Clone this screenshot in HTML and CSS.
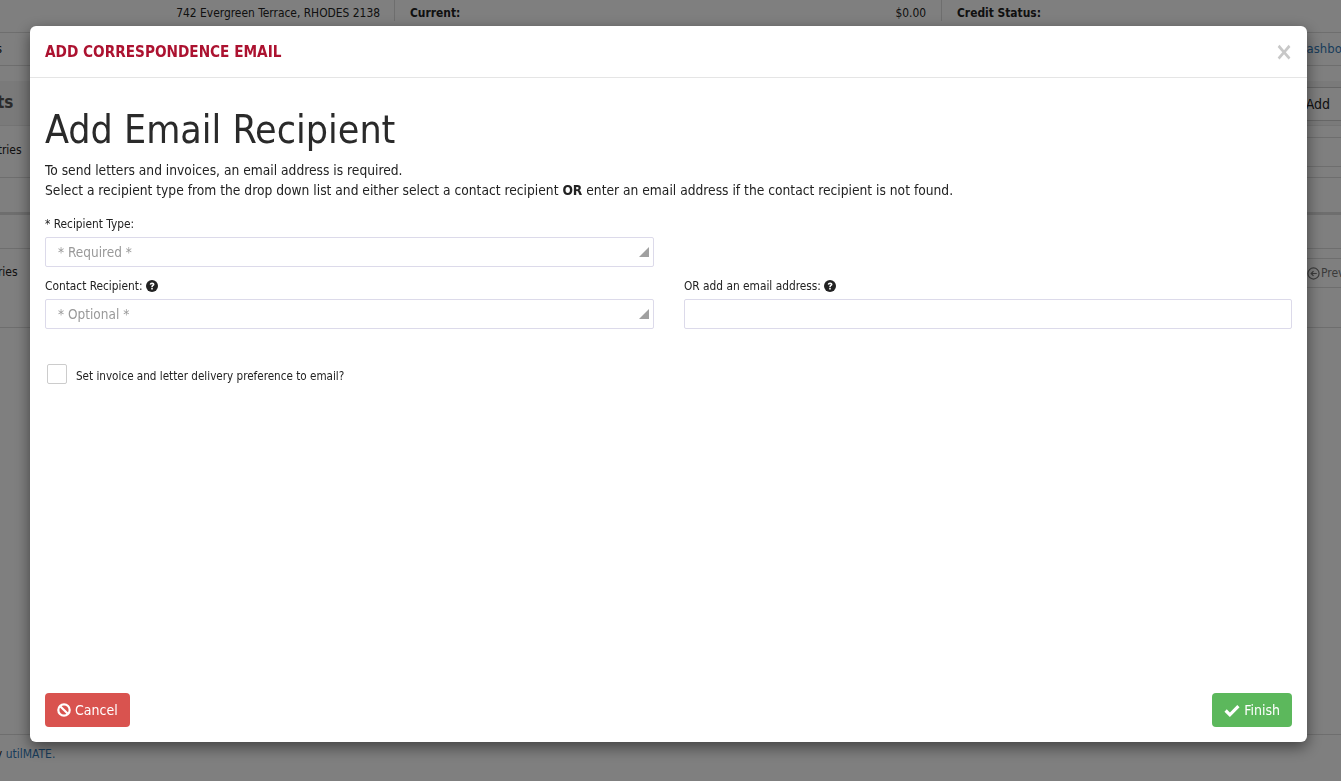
FILE: index.html
```html
<!DOCTYPE html>
<html lang="en">
<head>
<meta charset="utf-8">
<title>Add Correspondence Email</title>
<link rel="stylesheet" href="styles.css">
</head>
<body>
<div class="page">
  <div class="info-strip">
    <div class="info-cell address"><span>742 Evergreen Terrace, RHODES 2138</span></div>
    <div class="info-cell current"><strong>Current:</strong><span>$0.00</span></div>
    <div class="info-cell credit"><strong>Credit Status:</strong></div>
  </div>
  <div class="nav-row"><span class="nav-cut">s</span><a class="link nav-link">Dashboard</a></div>
  <div class="gap-row"></div>
  <div class="head-row"><strong class="head-cut">ts</strong><span class="add-btn">Add</span></div>
  <div class="entries-row"><span class="entries-cut">Entries</span><span class="tool-box"></span></div>
  <div class="blank-row"></div>
  <div class="thin-row"></div>
  <div class="entries-row second"><span class="entries-cut second-cut">Entries</span><span class="tool-box prev"><svg class="prev-icon" viewBox="0 0 14 14"><circle cx="7" cy="7" r="6" fill="none" stroke="currentColor" stroke-width="1.300"/><path d="M10.500 7H4.500M7 4.500 4.500 7 7 9.500" fill="none" stroke="currentColor" stroke-width="1.300"/></svg>Previous</span></div>
  <div class="filler"></div>
  <div class="footer-row"><span class="footer-cut">by <a class="link">utilMATE.</a></span></div>
</div>

<div class="overlay">
  <div class="modal">
    <header class="modal-header">
      <h4 class="modal-title">ADD CORRESPONDENCE EMAIL</h4>
      <span class="close">×</span>
    </header>
    <main class="modal-body">
      <h1 class="heading">Add Email Recipient</h1>
      <p class="intro">To send letters and invoices, an email address is required.<br>Select a recipient type from the drop down list and either select a contact recipient <strong>OR</strong> enter an email address if the contact recipient is not found.</p>
      <div class="form-grid">
        <div class="field">
          <label class="label">* Recipient Type:</label>
          <div class="control select"><span>* Required *</span><i class="corner"></i></div>
        </div>
        <div></div>
        <div class="field">
          <label class="label">Contact Recipient: <svg class="help" viewBox="0 0 12 12"><circle cx="6" cy="6" r="6"/><path d="M3.700 4.600c.1-1.500 1.100-2.200 2.400-2.200 1.400 0 2.400.8 2.400 1.900 0 1.600-1.700 1.500-1.700 2.800H5.200c0-1.900 1.500-1.900 1.500-2.600 0-.3-.3-.6-.7-.6-.5 0-.7.300-.8.800zM5.200 7.800h1.600v1.600H5.200z" fill="#fff"/></svg></label>
          <div class="control select"><span>* Optional *</span><i class="corner"></i></div>
        </div>
        <div class="field">
          <label class="label">OR add an email address: <svg class="help" viewBox="0 0 12 12"><circle cx="6" cy="6" r="6"/><path d="M3.700 4.600c.1-1.500 1.100-2.200 2.400-2.200 1.400 0 2.400.8 2.400 1.900 0 1.600-1.700 1.500-1.700 2.800H5.200c0-1.900 1.500-1.900 1.500-2.600 0-.3-.3-.6-.7-.6-.5 0-.7.300-.8.800zM5.200 7.800h1.600v1.600H5.200z" fill="#fff"/></svg></label>
          <div class="control"></div>
        </div>
      </div>
      <div class="check-row"><span class="checkbox"></span><span class="check-label">Set invoice and letter delivery preference to email?</span></div>
    </main>
    <footer class="modal-footer">
      <button class="btn danger" type="button"><svg class="btn-icon" viewBox="0 0 14 14"><circle cx="7" cy="7" r="5.700" fill="none" stroke="#fff" stroke-width="2.200"/><path d="M3.200 3.200l7.600 7.600" stroke="#fff" stroke-width="2.200"/></svg>Cancel</button>
      <button class="btn success" type="button"><svg class="btn-icon check" viewBox="0 0 15 12"><path d="M1.500 6 5.500 10 13.500 2" fill="none" stroke="#fff" stroke-width="3"/></svg>Finish</button>
    </footer>
  </div>
</div>
</body>
</html>
```
FILE: styles.css
```css
* { box-sizing: border-box; }
html, body { margin: 0; height: 100%; overflow: hidden; }
body {
  font-family: "DejaVu Sans Condensed", "DejaVu Sans", sans-serif;
  font-size: 12px;
  color: #222;
  background: #fff;
}
.page { height: 781px; display: flex; flex-direction: column; overflow: hidden; }

.info-strip { height: 32px; display: flex; flex: none; align-items: flex-start; }
.info-cell { height: 21px; padding-top: 6px; line-height: 15px; font-size: 11.900px; }
.address { width: 395px; padding-right: 14px; text-align: right; border-right: 1px solid #ddd; }
.current { width: 547px; padding-left: 15px; padding-right: 15px; border-right: 1px solid #ddd; display: flex; justify-content: space-between; }
.credit { padding-left: 15px; }

.link { color: #337ab7; }
.nav-row { height: 34px; border-top: 1px solid #ddd; border-bottom: 1px solid #ddd; display: flex; justify-content: space-between; align-items: center; flex: none; font-size: 13px; padding-bottom: 2px; }
.nav-cut { margin-left: -4px; }
.nav-link { margin-right: -20px; }
.gap-row { height: 15px; flex: none; }
.head-row { height: 45px; background: #f5f5f5; display: flex; justify-content: space-between; align-items: flex-start; flex: none; border-bottom: 1px solid #e8e8e8; }
.head-cut { font-size: 17px; color: #555; margin: 11px 0 0 -3px; }
.add-btn { font-size: 14px; height: 34px; margin: 6px -10px 0 0; padding: 8px 20px 0 5px; border: 1px solid #ccc; background: #fff; }

.entries-row { height: 52px; border-bottom: 1px solid #ddd; display: flex; justify-content: space-between; align-items: flex-start; flex: none; }
.entries-cut { margin: 17px 0 0 -16px; }
.tool-box { height: 30px; width: 60px; margin: 11px -10px 0 0; border-top: 1px solid #ddd; border-bottom: 1px solid #ddd; }
.blank-row { height: 37px; border-bottom: 3px solid #ddd; flex: none; }
.thin-row { height: 34px; border-bottom: 1px solid #ddd; flex: none; }
.second { height: 79px; }
.second-cut { margin: 16px 0 0 -20px; }
.prev { color: #777; display: flex; align-items: center; gap: 0; margin: 9px -30px 0 0; width: 64px; }
.prev-icon { width: 13px; height: 13px; margin-right: 1px; }
.filler { flex: 1; }
.footer-row { height: 47px; border-top: 1px solid #ddd; padding-top: 12px; flex: none; }
.footer-cut { display: block; margin-left: -11px; }

.overlay { position: fixed; inset: 0; background: rgba(0, 0, 0, 0.5); }
.modal {
  position: absolute; left: 30px; top: 26px; width: 1277px; height: 716px;
  display: flex; flex-direction: column;
  background: #fff; border-radius: 6px;
  box-shadow: 0 5px 15px rgba(0, 0, 0, 0.5);
}
.modal-header { height: 52px; padding: 0 15px; display: flex; justify-content: space-between; align-items: center; border-bottom: 1px solid #e5e5e5; flex: none; }
.modal-title { margin: 0; font-size: 15.200px; font-weight: 700; color: #ac1230; }
.close { font-size: 24px; font-weight: 700; color: #c8c8c8; line-height: 1; margin-right: -1px; }
.modal-body { flex: 1; padding: 0 15px; }
.heading { margin: 29px 0 0; font-size: 39px; line-height: 46px; font-weight: 400; color: #2a2a2a; }
.intro { margin: 7px 0 0; font-size: 13.700px; line-height: 20px; color: #222; }
.form-grid { margin-top: 16px; display: grid; grid-template-columns: 609px 608px; column-gap: 30px; row-gap: 11px; }
.label { display: flex; align-items: center; gap: 3px; height: 16px; font-size: 11.800px; margin-bottom: 5px; }
.help { width: 12px; height: 12px; fill: #222; }
.control { height: 30px; border: 1px solid #dcdaea; border-radius: 2px; padding: 0 12px; display: flex; align-items: center; position: relative; color: #999; font-size: 13.500px; }
.corner { position: absolute; right: 4px; bottom: 9px; width: 0; height: 0; border-left: 10px solid transparent; border-bottom: 10px solid #a0a0a0; }
.check-row { display: flex; align-items: center; gap: 9px; margin: 35px 0 0 2px; }
.checkbox { width: 20px; height: 20px; border: 1px solid #ccc; border-radius: 2px; }
.check-label { font-size: 11.600px; padding-top: 4px; }
.modal-footer { padding: 0 15px 15px; display: flex; justify-content: space-between; flex: none; }
.btn { height: 34px; border: 0; border-radius: 4px; color: #fff; font: 14px "DejaVu Sans Condensed", "DejaVu Sans", sans-serif; display: flex; align-items: center; gap: 4px; padding: 0 12px; }
.danger { background: #d9534f; }
.success { background: #5cb85c; }
.btn-icon { width: 14px; height: 14px; }
.check { width: 16px; height: 13px; }
```
